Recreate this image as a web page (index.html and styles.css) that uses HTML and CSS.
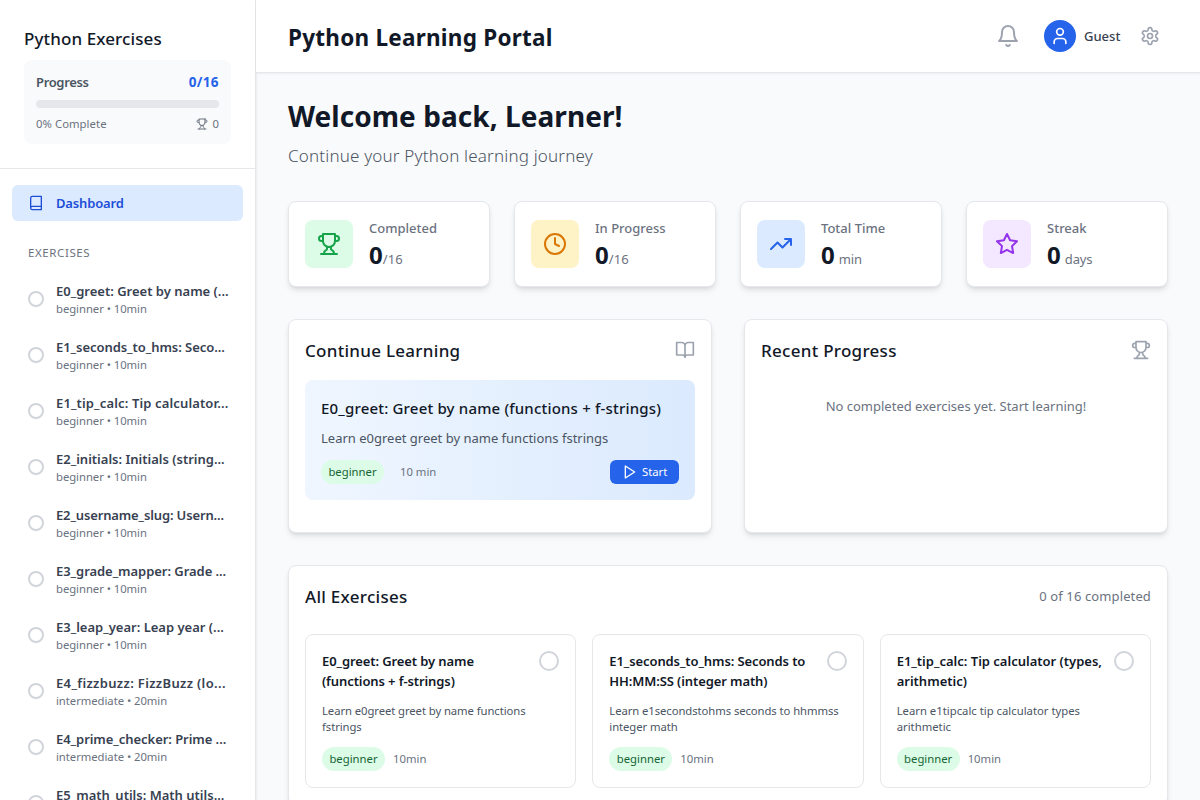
FILE: index.html
```html
<!DOCTYPE html>
<html lang="en">
<head>
<meta charset="utf-8">
<title>Python Learning Portal</title>
<link rel="stylesheet" href="styles.css">
</head>
<body>
<svg class="defs" width="0" height="0">
  <symbol id="trophy" viewBox="0 0 24 24"><path d="M6 9H4.5a2.5 2.5 0 0 1 0-5H6M18 9h1.5a2.5 2.5 0 0 0 0-5H18M4 22h16M10 14.66V17c0 .55-.47.98-.97 1.21C7.85 18.75 7 20.24 7 22M14 14.66V17c0 .55.47.98.97 1.21C16.15 18.75 17 20.24 17 22M18 2H6v7a6 6 0 0 0 12 0V2Z"/></symbol>
</svg>
<div class="app">
  <aside class="sidebar">
    <div class="side-head">
      <h2 class="side-title">Python Exercises</h2>
      <div class="progress">
        <div class="row"><span class="progress-label">Progress</span><span class="progress-value">0/16</span></div>
        <div class="bar"></div>
        <div class="row progress-foot"><span>0% Complete</span><span class="cups"><svg class="icon i12"><use href="#trophy"/></svg>0</span></div>
      </div>
    </div>
    <nav class="nav">
      <a class="nav-link"><svg class="icon i16" viewBox="0 0 24 24"><path d="M4 19.500V4.500A2.500 2.500 0 0 1 6.500 2H20v20H6.500a2.500 2.500 0 0 1 0-5H20"/></svg><span>Dashboard</span></a>
      <h3 class="nav-label">EXERCISES</h3>
      <ul class="list">
        <li class="item"><i class="ring"></i><div><p class="item-title">E0_greet: Greet by name (...</p><p class="item-meta">beginner • 10min</p></div></li>
        <li class="item"><i class="ring"></i><div><p class="item-title snug">E1_seconds_to_hms: Seco...</p><p class="item-meta">beginner • 10min</p></div></li>
        <li class="item"><i class="ring"></i><div><p class="item-title loose">E1_tip_calc: Tip calculator...</p><p class="item-meta">beginner • 10min</p></div></li>
        <li class="item"><i class="ring"></i><div><p class="item-title">E2_initials: Initials (string...</p><p class="item-meta">beginner • 10min</p></div></li>
        <li class="item"><i class="ring"></i><div><p class="item-title tight">E2_username_slug: Usern...</p><p class="item-meta">beginner • 10min</p></div></li>
        <li class="item"><i class="ring"></i><div><p class="item-title snug">E3_grade_mapper: Grade ...</p><p class="item-meta">beginner • 10min</p></div></li>
        <li class="item"><i class="ring"></i><div><p class="item-title">E3_leap_year: Leap year (...</p><p class="item-meta">beginner • 10min</p></div></li>
        <li class="item"><i class="ring"></i><div><p class="item-title loose long">E4_fizzbuzz: FizzBuzz (lo...</p><p class="item-meta">intermediate • 20min</p></div></li>
        <li class="item"><i class="ring"></i><div><p class="item-title snug">E4_prime_checker: Prime ...</p><p class="item-meta">intermediate • 20min</p></div></li>
        <li class="item"><i class="ring"></i><div><p class="item-title">E5_math_utils: Math utils...</p><p class="item-meta">intermediate • 20min</p></div></li>
      </ul>
    </nav>
  </aside>
  <div class="page">
    <header class="topbar">
      <h1 class="brand">Python Learning Portal</h1>
      <div class="tools">
        <button class="tool"><svg class="icon i24" viewBox="0 0 24 24"><path d="M6 8a6 6 0 0 1 12 0c0 7 3 9 3 9H3s3-2 3-9M10.300 21a1.940 1.940 0 0 0 3.400 0"/></svg></button>
        <div class="user"><span class="avatar"><svg class="icon i20" viewBox="0 0 24 24"><path d="M19 21v-2a4 4 0 0 0-4-4H9a4 4 0 0 0-4 4v2"/><circle cx="12" cy="7" r="4"/></svg></span><span class="user-name">Guest</span></div>
        <button class="tool"><svg class="icon i20" viewBox="0 0 24 24"><path d="M12.220 2h-.44a2 2 0 0 0-2 2v.18a2 2 0 0 1-1 1.730l-.43.25a2 2 0 0 1-2 0l-.15-.08a2 2 0 0 0-2.730.73l-.22.38a2 2 0 0 0 .73 2.730l.15.1a2 2 0 0 1 1 1.720v.51a2 2 0 0 1-1 1.740l-.15.09a2 2 0 0 0-.73 2.730l.22.38a2 2 0 0 0 2.730.73l.15-.08a2 2 0 0 1 2 0l.43.25a2 2 0 0 1 1 1.730V20a2 2 0 0 0 2 2h.44a2 2 0 0 0 2-2v-.18a2 2 0 0 1 1-1.730l.43-.25a2 2 0 0 1 2 0l.15.08a2 2 0 0 0 2.730-.73l.22-.39a2 2 0 0 0-.73-2.730l-.15-.08a2 2 0 0 1-1-1.740v-.5a2 2 0 0 1 1-1.740l.15-.09a2 2 0 0 0 .73-2.730l-.22-.38a2 2 0 0 0-2.730-.73l-.15.08a2 2 0 0 1-2 0l-.43-.25a2 2 0 0 1-1-1.730V4a2 2 0 0 0-2-2z"/><circle cx="12" cy="12" r="3"/></svg></button>
      </div>
    </header>
    <main class="content">
      <h2 class="welcome">Welcome back, Learner!</h2>
      <p class="subtitle">Continue your Python learning journey</p>
      <section class="stats">
        <div class="card stat"><span class="tile green"><svg class="icon i24"><use href="#trophy"/></svg></span><div><p class="stat-label">Completed</p><p class="stat-value">0<small>/16</small></p></div></div>
        <div class="card stat"><span class="tile amber"><svg class="icon i24" viewBox="0 0 24 24"><circle cx="12" cy="12" r="10"/><path d="M12 6v6l4 2"/></svg></span><div><p class="stat-label">In Progress</p><p class="stat-value">0<small>/16</small></p></div></div>
        <div class="card stat"><span class="tile blue"><svg class="icon i24" viewBox="0 0 24 24"><path d="m22 7-8.500 8.500-5-5L2 17M16 7h6v6"/></svg></span><div><p class="stat-label">Total Time</p><p class="stat-value">0<small class="unit">min</small></p></div></div>
        <div class="card stat"><span class="tile purple"><svg class="icon i24" viewBox="0 0 24 24"><path d="m12 2 3.090 6.260L22 9.270l-5 4.870 1.180 6.880L12 17.770l-6.180 3.250L7 14.140 2 9.270l6.910-1.010L12 2z"/></svg></span><div><p class="stat-label">Streak</p><p class="stat-value">0<small class="unit">days</small></p></div></div>
      </section>
      <section class="panels">
        <div class="card panel">
          <div class="panel-head"><h3 class="heading">Continue Learning</h3><svg class="icon i20 muted" viewBox="0 0 24 24"><path d="M2 3h6a4 4 0 0 1 4 4v14a3 3 0 0 0-3-3H2zM22 3h-6a4 4 0 0 0-4 4v14a3 3 0 0 1 3-3h7z"/></svg></div>
          <div class="next">
            <h4 class="next-title">E0_greet: Greet by name (functions + f-strings)</h4>
            <p class="next-text">Learn e0greet greet by name functions fstrings</p>
            <div class="row"><div class="tags wide"><span class="badge">beginner</span><span class="time">10 min</span></div>
            <button class="start"><svg class="icon i16" viewBox="0 0 24 24"><path d="m5 3 14 9-14 9V3z"/></svg>Start</button></div>
          </div>
        </div>
        <div class="card panel">
          <div class="panel-head"><h3 class="heading">Recent Progress</h3><svg class="icon i20 muted"><use href="#trophy"/></svg></div>
          <p class="empty">No completed exercises yet. Start learning!</p>
        </div>
      </section>
      <section class="card all">
        <div class="all-head"><h3 class="heading">All Exercises</h3><span class="count">0 of 16 completed</span></div>
        <div class="grid">
          <article class="exercise"><div class="exercise-head"><h4 class="exercise-title">E0_greet: Greet by name<br>(functions + f-strings)</h4><i class="ring big"></i></div><p class="exercise-text">Learn e0greet greet by name functions<br>fstrings</p><div class="tags"><span class="badge">beginner</span><span class="time">10min</span></div></article>
          <article class="exercise"><div class="exercise-head"><h4 class="exercise-title">E1_seconds_to_hms: Seconds to<br>HH:MM:SS (integer math)</h4><i class="ring big"></i></div><p class="exercise-text">Learn e1secondstohms seconds to hhmmss<br>integer math</p><div class="tags"><span class="badge">beginner</span><span class="time">10min</span></div></article>
          <article class="exercise"><div class="exercise-head"><h4 class="exercise-title even">E1_tip_calc: Tip calculator (types,<br>arithmetic)</h4><i class="ring big"></i></div><p class="exercise-text even">Learn e1tipcalc tip calculator types<br>arithmetic</p><div class="tags"><span class="badge">beginner</span><span class="time">10min</span></div></article>
        </div>
      </section>
    </main>
  </div>
</div>
</body>
</html>
```
FILE: styles.css
```css
* { box-sizing: border-box; margin: 0; padding: 0; }
body { height: 800px; overflow: hidden; font-family: "Noto Sans", "Open Sans", sans-serif; color: #111827; background: #f9fafb; }
button { border: 0; background: none; font: inherit; }
ul { list-style: none; }
.defs { position: absolute; }
.icon { display: block; flex: none; fill: none; stroke: currentColor; stroke-width: 2; stroke-linecap: round; stroke-linejoin: round; }
.i12 { width: 12px; height: 12px; }
.i16 { width: 16px; height: 16px; }
.i20 { width: 20px; height: 20px; }
.i24 { width: 24px; height: 24px; }
.muted { color: #9ca3af; }
.row { display: flex; align-items: center; justify-content: space-between; }

.app { display: flex; height: 800px; overflow: hidden; }
.sidebar { width: 256px; flex: none; background: #fff; border-right: 1px solid #e5e7eb; box-shadow: 0 1px 3px rgba(0,0,0,.1), 0 1px 2px -1px rgba(0,0,0,.1); }
.side-head { padding: 24px; border-bottom: 1px solid #e5e7eb; }
.side-title { padding-top: 1px; margin-bottom: -1px; font-size: 17px; line-height: 28px; font-weight: 500; letter-spacing: .1px; }
.progress { margin-top: 8px; padding: 12px; background: #f9fafb; border-radius: 8px; }
.progress-label { font-size: 13px; line-height: 20px; font-weight: 600; letter-spacing: -.35px; color: #4b5563; }
.progress-value { font-size: 13.500px; line-height: 20px; font-weight: 700; letter-spacing: .4px; color: #2563eb; }
.bar { height: 8px; margin: 8px 0; border-radius: 4px; background: #e5e7eb; }
.progress-foot { font-size: 11.300px; line-height: 16px; letter-spacing: .05px; color: #6b7280; }
.cups { display: flex; align-items: center; gap: 4px; }
.nav { padding: 16px 12px; }
.nav-link { display: flex; align-items: center; gap: 12px; padding: 8px 16px; border-radius: 6px; background: #dbeafe; color: #1d4ed8; font-size: 13px; line-height: 20px; font-weight: 600; letter-spacing: -.15px; }
.nav-label { margin: 24px 0 12px; padding: 0 16px; font-size: 11.500px; line-height: 16px; font-weight: 400; letter-spacing: .6px; color: #6b7280; }
.list { display: flex; flex-direction: column; gap: 4px; }
.item { display: flex; align-items: center; gap: 12px; padding: 8px 16px; white-space: nowrap; }
.item-title { font-size: 13px; line-height: 20px; font-weight: 600; color: #374151; }
.snug { letter-spacing: -.05px; }
.tight { letter-spacing: -.14px; }
.loose { letter-spacing: .14px; }
.long { letter-spacing: .35px; }
.item-meta { font-size: 11.300px; line-height: 16px; letter-spacing: -.05px; color: #6b7280; }
.ring { width: 16px; height: 16px; flex: none; border: 2px solid #d1d5db; border-radius: 50%; }
.ring.big { width: 20px; height: 20px; }

.page { flex: 1; min-width: 0; }
.topbar { display: flex; align-items: center; justify-content: space-between; height: 73px; padding: 0 32px; background: #fff; border-bottom: 1px solid #e5e7eb; box-shadow: 0 1px 2px rgba(0,0,0,.05); }
.brand { padding-top: 3px; font-size: 22.500px; line-height: 32px; font-weight: 700; letter-spacing: .24px; }
.tools { display: flex; align-items: center; gap: 16px; }
.tool { padding: 8px; color: #9ca3af; }
.user { display: flex; align-items: center; gap: 8px; margin-right: -4px; }
.avatar { display: flex; align-items: center; justify-content: center; width: 32px; height: 32px; border-radius: 50%; background: #2563eb; color: #fff; }
.user-name { width: 36px; font-size: 13px; line-height: 20px; font-weight: 500; color: #374151; }

.content { padding: 24px 32px; }
.welcome { padding-top: 1px; margin-bottom: -1px; font-size: 28px; line-height: 36px; font-weight: 700; letter-spacing: .05px; }
.subtitle { padding-top: 1px; margin: 8px 0 31px; font-size: 17px; line-height: 28px; font-weight: 300; letter-spacing: .18px; color: #4b5563; }
.card { background: #fff; border: 1px solid #e5e7eb; border-radius: 8px; box-shadow: 0 4px 6px -1px rgba(0,0,0,.1), 0 2px 4px -2px rgba(0,0,0,.1); }
.stats { display: grid; grid-template-columns: repeat(4, 1fr); gap: 24px; }
.stat { display: flex; align-items: center; gap: 16px; padding: 16px; }
.tile { display: flex; align-items: center; justify-content: center; width: 48px; height: 48px; border-radius: 8px; }
.green { background: #dcfce7; color: #16a34a; }
.amber { background: #fef3c7; color: #d97706; }
.blue { background: #dbeafe; color: #2563eb; }
.purple { background: #f3e8ff; color: #9333ea; }
.stat-label { font-size: 13px; line-height: 20px; font-weight: 500; color: #6b7280; }
.stat-value { height: 32px; padding-top: 1px; font-size: 24px; line-height: 32px; font-weight: 700; }
.stat-value small { font-size: 13px; line-height: 20px; font-weight: 400; letter-spacing: .15px; color: #6b7280; }
.stat-value .unit { margin-left: 4px; letter-spacing: -.1px; }
.panels { display: grid; grid-template-columns: 1fr 1fr; gap: 32px; margin: 32px 0; }
.panel { padding: 16px; }
.panel-head { display: flex; align-items: center; justify-content: space-between; height: 28px; margin-bottom: 16px; }
.heading { padding-top: 1px; margin-bottom: -1px; font-size: 17px; line-height: 28px; font-weight: 500; letter-spacing: .28px; }
.next { margin-bottom: 16px; padding: 16px; border-radius: 8px; background: linear-gradient(to right, #eff6ff, #dbeafe); }
.next-title { font-size: 15px; line-height: 24px; font-weight: 500; letter-spacing: .18px; white-space: nowrap; }
.next-text { margin: 8px 0 12px; font-size: 13px; line-height: 20px; color: #4b5563; }
.tags { display: flex; align-items: center; gap: 8px; }
.tags.wide { gap: 16px; }
.badge { width: 63px; padding: 4px 0; border-radius: 12px; background: #dcfce7; color: #166534; font-size: 11.300px; line-height: 16px; text-align: center; }
.time { font-size: 11.300px; line-height: 16px; color: #6b7280; }
.start { display: flex; align-items: center; gap: 4px; width: 69px; padding: 4px 12px; border-radius: 6px; background: #2563eb; color: #fff; font-size: 11.300px; line-height: 16px; }
.empty { padding: 16px 0; font-size: 13px; line-height: 20px; color: #6b7280; text-align: center; }
.all { padding: 16px; }
.all-head { display: flex; align-items: center; justify-content: space-between; margin-bottom: 24px; height: 28px; }
.count { font-size: 13px; line-height: 20px; letter-spacing: .12px; color: #6b7280; }
.grid { display: grid; grid-template-columns: repeat(3, minmax(0, 1fr)); gap: 16px; }
.exercise { padding: 16px; border: 1px solid #e5e7eb; border-radius: 8px; }
.exercise-head { display: flex; justify-content: space-between; margin-bottom: 12px; white-space: nowrap; }
.exercise-title { font-size: 13px; line-height: 20px; font-weight: 600; letter-spacing: -.1px; }
.exercise-text { margin-bottom: 12px; font-size: 11.300px; line-height: 16px; letter-spacing: -.08px; color: #4b5563; white-space: nowrap; }
.even { letter-spacing: 0; }
```
